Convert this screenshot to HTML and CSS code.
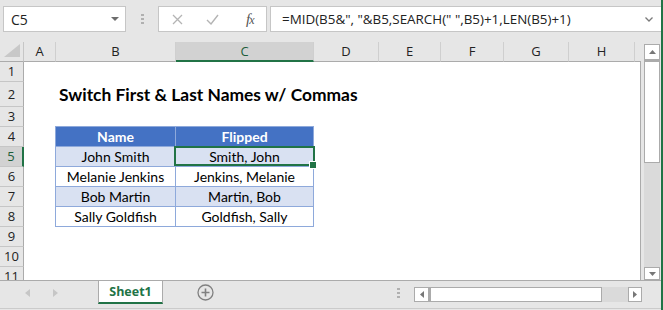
FILE: index.html
```html
<!DOCTYPE html>
<html>
<head>
<meta charset="utf-8">
<link rel="stylesheet" href="styles.css">
</head>
<body>
<div class="app">
  <div class="fbar">
    <div class="namebox"><span>C5</span><svg width="8" height="5" viewBox="0 0 8 5"><path d="M0 0h8L4 4z" fill="#6d6d6d"/></svg></div>
    <div class="grip"><i></i><i></i><i></i></div>
    <div class="fxbox">
      <svg class="ic-x" width="11" height="11" viewBox="0 0 11 11"><path d="M1 1l9 9M10 1l-9 9" stroke="#b4b4b4" stroke-width="1.3" fill="none"/></svg>
      <svg class="ic-ok" width="13" height="11" viewBox="0 0 13 11"><path d="M1 6l4 4 7-9" stroke="#b4b4b4" stroke-width="1.4" fill="none"/></svg>
      <span class="fx">f<span class="fxx">x</span></span>
    </div>
    <div class="formula"><span class="ftext">=MID(B5&amp;", "&amp;B5,SEARCH(" ",B5)+1,LEN(B5)+1)</span><svg width="8" height="5" viewBox="0 0 8 5"><path d="M0.5 0.5L4 4l3.5-3.5" stroke="#7a7a7a" stroke-width="1.3" fill="none"/></svg></div>
  </div>
  <div class="mid">
    <div class="sheet">
      <div class="colhead">
        <div class="corner"><svg width="16" height="13" viewBox="0 0 16 13"><path d="M16 0V13H0z" fill="#c8c8c8"/></svg></div>
        <div class="ch w-a">A</div>
        <div class="ch w-b">B</div>
        <div class="ch w-c sel">C</div>
        <div class="ch w-d">D</div>
        <div class="ch w-e">E</div>
        <div class="ch w-f">F</div>
        <div class="ch w-g">G</div>
        <div class="ch w-h">H</div>
        <div class="ch rest"></div>
      </div>
      <div class="grid">
        <div class="rowhead">
          <div class="rh">1</div>
          <div class="rh tall">2</div>
          <div class="rh">3</div>
          <div class="rh">4</div>
          <div class="rh sel">5</div>
          <div class="rh">6</div>
          <div class="rh">7</div>
          <div class="rh">8</div>
          <div class="rh">9</div>
          <div class="rh">10</div>
          <div class="rh">11</div>
        </div>
        <div class="body">
          <div class="title">Switch First &amp; Last Names w/ Commas</div>
          <div class="tbl">
            <div class="td th">Name</div><div class="td th c2">Flipped</div>
            <div class="td band">John Smith</div><div class="td band c2 active">Smith, John</div>
            <div class="td">Melanie Jenkins</div><div class="td c2">Jenkins, Melanie</div>
            <div class="td band">Bob Martin</div><div class="td band c2">Martin, Bob</div>
            <div class="td">Sally Goldfish</div><div class="td c2">Goldfish, Sally</div>
          </div>
        </div>
      </div>
    </div>
    <div class="vscroll">
      <div class="sbtn up"><svg width="7" height="4" viewBox="0 0 7 4"><path d="M0 4h7L3.5 0z" fill="#777"/></svg></div>
      <div class="vthumb"></div>
      <div class="vtrack"></div>
      <div class="sbtn down"><svg width="7" height="4" viewBox="0 0 7 4"><path d="M0 0h7L3.5 4z" fill="#777"/></svg></div>
    </div>
  </div>
  <div class="tabs">
    <div class="navs">
      <svg width="5" height="8" viewBox="0 0 5 8"><path d="M5 0v8L0 4z" fill="#c6c6c6"/></svg>
      <svg width="5" height="8" viewBox="0 0 5 8"><path d="M0 0v8l5-4z" fill="#c6c6c6"/></svg>
    </div>
    <div class="tab">Sheet1</div>
    <div class="add"><svg width="17" height="17" viewBox="0 0 17 17"><circle cx="8.5" cy="8.5" r="7.5" stroke="#808080" stroke-width="1.3" fill="none"/><path d="M8.5 4.5v8M4.5 8.5h8" stroke="#808080" stroke-width="1.6"/></svg></div>
    <div class="hgrip"><i></i><i></i><i></i></div>
    <div class="hscroll">
      <div class="hbtn"><svg width="4" height="7" viewBox="0 0 4 7"><path d="M4 0v7L0 3.5z" fill="#777"/></svg></div>
      <div class="hthumb"></div>
      <div class="htrack"></div>
      <div class="hbtn r"><svg width="4" height="7" viewBox="0 0 4 7"><path d="M0 0v7l4-3.5z" fill="#777"/></svg></div>
    </div>
  </div>
</div>
</body>
</html>
```
FILE: styles.css
```css
* { box-sizing: border-box; margin: 0; padding: 0; }
html, body { margin: 0; width: 663px; height: 310px; overflow: hidden; background: #e6e6e6; }
body { font-family: "Open Sans", "Noto Sans", sans-serif; color: #222; }

.app {
  width: 663px; height: 310px; background: #e6e6e6;
  display: flex; flex-direction: column;
  border-right: 2px solid #217346;
}

/* formula bar */
.fbar { height: 42px; flex: none; display: flex; align-items: flex-start; padding: 6px 0 0 3px; }
.namebox {
  width: 123px; height: 26px; background: #fff; border: 1px solid #c6c6c6;
  display: flex; align-items: center; justify-content: space-between;
  padding: 0 6px 0 7px; font-size: 14px; color: #222;
}
.grip { width: 3px; height: 26px; margin-left: 15px; display: flex; flex-direction: column; justify-content: center; gap: 2px; }
.grip i, .hgrip i { display: block; width: 3px; height: 2px; background: #b0b0b0; }
.fxbox {
  width: 109px; height: 26px; margin-left: 14px; background: #fff; border: 1px solid #c6c6c6;
  display: flex; align-items: center; padding-left: 13px;
}
.ic-ok { margin-left: 23px; }
.fx { margin-left: 27px; font-family: "Liberation Serif", serif; font-style: italic; font-size: 15px; color: #555; letter-spacing: -1px; }
.fxx { font-size: 12px; }
.formula {
  flex: 1; height: 26px; margin-left: 3px; background: #fff; border: 1px solid #c6c6c6; border-right: none;
  display: flex; align-items: center; justify-content: space-between; padding: 0 8px 0 11px;
}
.ftext { font-size: 13.4px; color: #222; white-space: pre; }

/* grid */
.mid { height: 238px; flex: none; display: flex; }
.sheet { width: 641px; display: flex; flex-direction: column; }
.colhead { height: 20px; display: flex; flex: none; }
.corner {
  width: 24px; height: 20px; border-right: 1px solid #c6c6c6; border-bottom: 1px solid #ababab;
  display: flex; align-items: flex-end; justify-content: flex-end; padding: 0 3px 4px 0;
}
.ch {
  height: 20px; border-right: 1px solid #cfcfcf; border-bottom: 1px solid #ababab;
  text-align: center; font-size: 13px; line-height: 19px; color: #222; flex: none;
}
.ch.sel { background: #d2d2d2; border-bottom: 2px solid #217346; color: #1d5e3a; line-height: 18px; }
.w-a { width: 32px; }
.w-b { width: 120px; }
.w-c { width: 138px; }
.w-d { width: 65px; }
.w-e { width: 62px; }
.w-f { width: 63px; }
.w-g { width: 65px; }
.w-h { width: 66px; }
.ch.rest { flex: 1; border-right: none; }

.grid { flex: 1; display: flex; min-height: 0; overflow: hidden; }
.rowhead { width: 24px; display: flex; flex-direction: column; flex: none; }
.rh {
  height: 20px; flex: none; border-bottom: 1px solid #c6c6c6; border-right: 1px solid #ababab;
  text-align: center; font-size: 13px; line-height: 19px; color: #222;
}
.rh.tall { height: 25px; line-height: 24px; }
.rh.sel { background: #d2d2d2; border-right: 2px solid #217346; color: #1d5e3a; }

.body { flex: 1; background: #fff; border-right: 1px solid #ababab; padding-top: 20px; }
.title {
  height: 25px; line-height: 25px; padding-left: 35px;
  font-family: Lato, "Liberation Sans", sans-serif; font-weight: 700; font-size: 17.4px; color: #000;
}
.tbl {
  margin: 19px 0 0 31px; width: 259px;
  display: grid; grid-template-columns: 120px 138px;
  border-left: 1px solid #8ea9db; border-top: 1px solid #8ea9db;
}
.td {
  height: 20px; border-right: 1px solid #8ea9db; border-bottom: 1px solid #8ea9db;
  text-align: center; line-height: 19px; font-family: Lato, "Liberation Sans", sans-serif; font-size: 14px; color: #000;
}
.td.th { background: #4472c4; color: #fff; font-weight: 700; }
.td.band { background: #d9e1f2; }
.td.active { position: relative; }
.td.active::after {
  content: ""; position: absolute; top: -1px; left: -2px; right: -2px; bottom: 0;
  border: 2px solid #217346;
}
.td.active::before {
  content: ""; position: absolute; right: -4px; bottom: -3px; width: 6px; height: 6px;
  background: #217346; border: 1px solid #fff; z-index: 2;
}

/* vertical scrollbar */
.vscroll { width: 16px; height: 236px; margin: 2px 0 0 3px; display: flex; flex-direction: column; }
.sbtn { background: #fff; border: 1px solid #ababab; display: flex; align-items: center; justify-content: center; flex: none; }
.sbtn.up { height: 16px; }
.sbtn.down { height: 13px; }
.vthumb { height: 103px; background: #fff; border: 1px solid #ababab; border-top-width: 2px; flex: none; }
.vtrack { flex: 1; background: #dadada; }

/* tabs */
.tabs {
  height: 29px; flex: none; border-top: 1px solid #ababab; border-bottom: 1px solid #cbcbcb;
  display: flex; align-items: flex-start;
}
.navs { width: 98px; display: flex; align-items: center; gap: 23px; padding: 8px 0 0 25px; }
.tab {
  width: 65px; height: 23px; background: #fff;
  border-left: 1px solid #ababab; border-right: 1px solid #ababab; border-bottom: 2px solid #217346;
  text-align: center; font-size: 12.5px; font-weight: 700; color: #217346; line-height: 21px;
}
.add { margin: 3px 0 0 34px; width: 17px; height: 17px; }
.hgrip { margin: 7px 0 0 183px; width: 3px; display: flex; flex-direction: column; gap: 2px; }
.hscroll { margin: 6px 0 0 14px; width: 228px; height: 15px; display: flex; }
.hbtn { width: 15px; height: 15px; background: #fff; border: 1px solid #ababab; display: flex; align-items: center; justify-content: center; flex: none; }
.hbtn.r { width: 14px; }
.hthumb { width: 173px; height: 15px; background: #fff; border: 1px solid #ababab; border-left-width: 2px; flex: none; }
.htrack { flex: 1; background: #dadada; }
```
